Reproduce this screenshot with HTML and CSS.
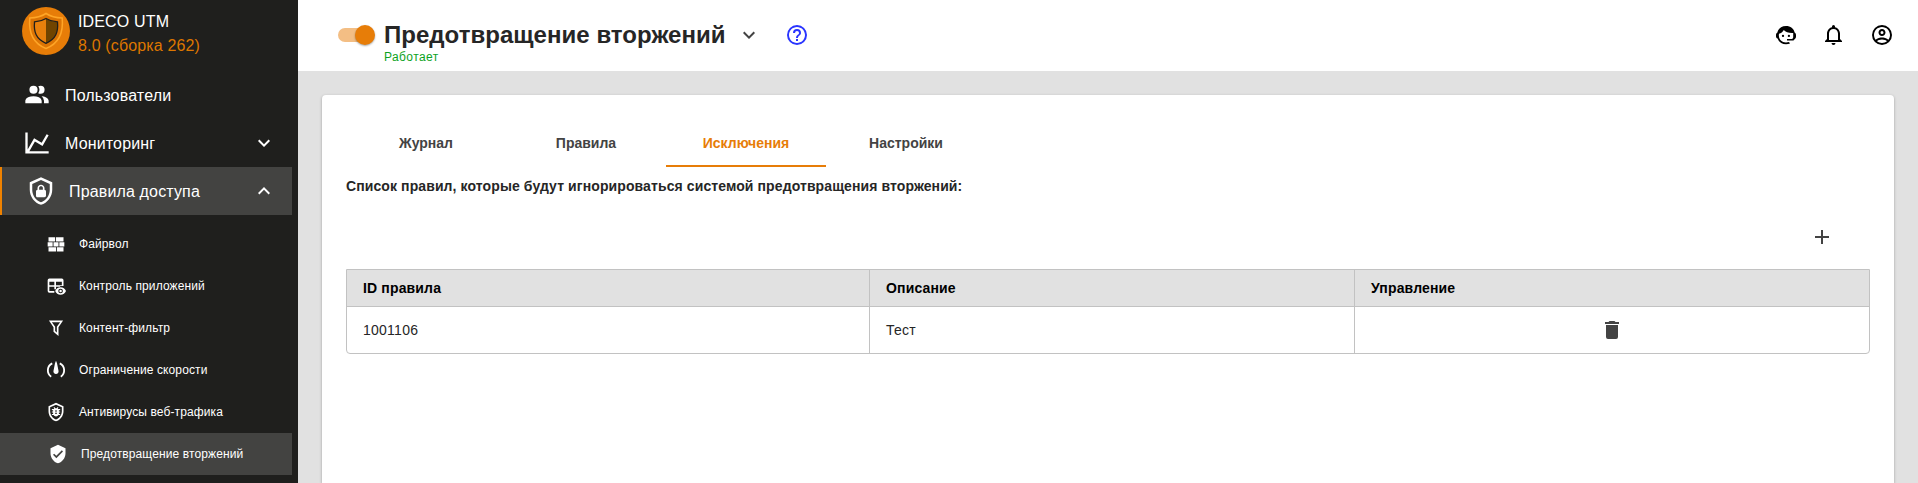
FILE: index.html
```html
<!DOCTYPE html>
<html lang="ru">
<head>
<meta charset="utf-8">
<title>Предотвращение вторжений</title>
<link rel="stylesheet" href="styles.css">
</head>
<body>
<div class="app">
  <aside class="sidebar">
    <div class="brand">
      <svg class="brand-logo" viewBox="0 0 48 48">
        <circle cx="24" cy="24" r="24" fill="#e77d08"/>
        <path d="M24 6.500C19 9.700 14 10.800 7.800 11 6.500 25 10 36 24 41.500 38 36 41.500 25 40.200 11 34 10.800 29 9.700 24 6.500Z" fill="#dc7404" stroke="#ffa526" stroke-width="1.500"/>
        <path d="M24 11.500C20 14 16.500 14.700 12.500 14.900 11.600 25 14 32 24 36.300Z" fill="#e8800c"/>
        <path d="M24 11.500C28 14 31.500 14.700 35.500 14.900 36.400 25 34 32 24 36.300Z" fill="#704400"/>
        <path d="M24 11.500C20 14 16.500 14.700 12.500 14.900 11.600 25 14 32 24 36.300 34 32 36.400 25 35.500 14.900 31.500 14.700 28 14 24 11.500Z" fill="none" stroke="#1f1f1d" stroke-width="1.300"/>
      </svg>
      <div class="brand-text">
        <div>IDECO UTM</div>
        <div class="brand-version">8.0 (сборка 262)</div>
      </div>
    </div>
    <nav class="menu">
      <a class="item">
        <svg class="i28" viewBox="0 0 24 24"><path d="M16 17V19H2V17S2 13 9 13 16 17 16 17M12.500 7.500A3.500 3.500 0 1 0 9 11A3.500 3.500 0 0 0 12.500 7.500M15.940 13A5.320 5.320 0 0 1 18 17V19H22V17S22 13.370 15.940 13M15 4A3.390 3.390 0 0 0 13.070 4.590A5 5 0 0 1 13.070 10.410A3.390 3.390 0 0 0 15 11A3.500 3.500 0 0 0 15 4Z"/></svg>
        <span>Пользователи</span>
      </a>
      <a class="item">
        <svg class="i28" viewBox="0 0 24 24"><path d="M16 11.780L20.240 4.450L21.970 5.450L16.740 14.500L10.230 10.750L5.460 19H22V21H2V3H4V17.540L9.500 8L16 11.780Z"/></svg>
        <span>Мониторинг</span>
        <svg class="chevron" viewBox="0 0 24 24"><path d="M7.410 8.580L12 13.170L16.590 8.580L18 10L12 16L6 10L7.410 8.580Z"/></svg>
      </a>
      <a class="item item-open">
        <svg class="i30" viewBox="0 0 24 24"><path d="M21 11C21 16.500 17.200 21.700 12 23C6.800 21.700 3 16.500 3 11V5L12 1L21 5V11M12 21C15.800 20 19 15.500 19 11.200V6.300L12 3.200L5 6.300V11.200C5 15.500 8.200 20 12 21M14.800 11V9.500C14.800 8.100 13.400 7 12 7S9.200 8.100 9.200 9.500V11C8.600 11 8 11.600 8 12.200V15.700C8 16.400 8.600 17 9.200 17H14.700C15.400 17 16 16.400 16 15.800V12.300C16 11.600 15.400 11 14.800 11M13.500 11H10.500V9.500C10.500 8.700 11.200 8.200 12 8.200S13.500 8.700 13.500 9.500V11Z" fill-rule="evenodd"/></svg>
        <span>Правила доступа</span>
        <svg class="chevron" viewBox="0 0 24 24"><path d="M7.410 15.410L12 10.830L16.590 15.410L18 14L12 8L6 14Z"/></svg>
      </a>
    </nav>
    <nav class="submenu">
      <a class="sub">
        <svg class="i20" viewBox="0 0 24 24"><path d="M3 16H12V21H3V16M2 10H8V15H2V10M9 10H15V15H9V10M16 10H22V15H16V10M13 16H21V21H13V16M3 4H11V9H3V4M12 4H21V9H12V4Z"/></svg>
        <span>Файрвол</span>
      </a>
      <a class="sub">
        <svg class="i20" viewBox="0 0 24 24"><path fill-rule="evenodd" d="M19 3H4A2 2 0 0 0 2 5V18A2 2 0 0 0 4 20H10V18H4V13H10V16H12V13H17V12H21V5A2 2 0 0 0 19 3M10 11H4V7H10ZM19 11H12V7H19ZM17.500 13.500C14.500 13.500 12 15.300 11 18 12 20.700 14.500 22.500 17.500 22.500S23 20.700 24 18C23 15.300 20.500 13.500 17.500 13.500M17.500 20.800A2.800 2.800 0 1 1 17.500 15.200 2.800 2.800 0 0 1 17.500 20.800M17.500 16.500A1.500 1.500 0 1 0 17.500 19.500 1.500 1.500 0 0 0 17.500 16.500Z"/></svg>
        <span>Контроль приложений</span>
      </a>
      <a class="sub">
        <svg class="i20" viewBox="0 0 24 24"><path d="M15 21.500L9 16.500V11L3.500 3H20.500L15 11V21.500M7.040 5L11 10.400V15.580L13 17.300V10.400L16.960 5H7.040Z"/></svg>
        <span>Контент-фильтр</span>
      </a>
      <a class="sub">
        <svg class="i20" viewBox="0 0 24 24"><path d="M12 1L10.800 4 9 13A3.100 3.100 0 1 0 15 13L13.200 4Z"/><path d="M7.500 4A9.300 9.300 0 0 0 6.200 20M16.500 4A9.300 9.300 0 0 1 17.800 20" fill="none" stroke="#fff" stroke-width="2.200"/></svg>
        <span>Ограничение скорости</span>
      </a>
      <a class="sub">
        <svg class="i20" viewBox="0 0 24 24"><path fill-rule="evenodd" d="M21 11C21 16.500 17.200 21.700 12 23C6.800 21.700 3 16.500 3 11V5L12 1L21 5V11M12 21C15.800 20 19 15.500 19 11.200V6.300L12 3.200L5 6.300V11.200C5 15.500 8.200 20 12 21Z"/><path fill-rule="evenodd" d="M17 8.500V9.800H15.500V11.400H17V12.700H15.500V14.300H17V15.600H15A3.500 3.500 0 0 1 9 15.600H7V14.300H8.500V12.700H7V11.400H8.500V9.800H7V8.500H9.300L10 7.900 9 6.900 9.900 6 11.300 7.400H12.700L14.100 6 15 6.900 14 7.900 14.700 8.500ZM10.800 10.300V11.500H13.200V10.300ZM10.800 13V14.200H13.200V13Z"/></svg>
        <span>Антивирусы веб-трафика</span>
      </a>
      <a class="sub sub-active">
        <svg class="i20" viewBox="0 0 24 24"><path fill-rule="evenodd" d="M10 17L6 13L7.410 11.590L10 14.170L16.590 7.580L18 9M12 1L3 5V11C3 16.550 6.840 21.740 12 23C17.160 21.740 21 16.550 21 11V5L12 1Z"/></svg>
        <span>Предотвращение вторжений</span>
      </a>
    </nav>
  </aside>
  <div class="main">
    <header class="topbar">
      <div class="toggle"><div class="knob"></div></div>
      <div class="heading">
        <h1>Предотвращение вторжений</h1>
        <div class="status">Работает</div>
      </div>
      <svg class="i24 title-chevron" viewBox="0 0 24 24"><path d="M7.410 8.580L12 13.170L16.590 8.580L18 10L12 16L6 10L7.410 8.580Z"/></svg>
      <svg class="i24 help" viewBox="0 0 24 24"><path d="M11 18H13V16H11V18M12 2A10 10 0 0 0 2 12A10 10 0 0 0 12 22A10 10 0 0 0 22 12A10 10 0 0 0 12 2M12 20C7.590 20 4 16.410 4 12C4 7.590 7.590 4 12 4C16.410 4 20 7.590 20 12C20 16.410 16.410 20 12 20M12 6A4 4 0 0 0 8 10H10A2 2 0 0 1 12 8A2 2 0 0 1 14 10C14 12 11 11.750 11 15H13C13 12.750 16 12.500 16 10A4 4 0 0 0 12 6Z"/></svg>
      <div class="actions">
        <svg class="i24" viewBox="0 0 24 24"><path d="M3.400 9.500C4.200 5.500 7.500 3 12 3S19.800 5.500 20.600 9.500C21.500 10 22 11 22 12.200V13.800C22 15 21.300 16 20.300 16.400L19.500 17.500H13V16H18.300L19.200 14.500V10C15 10.200 11.500 9.300 9.800 7 8.800 9 7 10.300 5 10.800 4 16 7.500 19.500 12 19.500 13 19.500 14 19.300 15 19L16 20.500C14.800 21 13.500 21.300 12 21.300 8 21.300 4.800 19 3.600 15.600 2.600 15.300 2 14.400 2 13.300V12C2 10.900 2.500 10 3.400 9.500Z"/><circle cx="9" cy="12.900" r="1.150"/><circle cx="14.900" cy="12.900" r="1.150"/></svg>
        <svg class="i24" viewBox="0 0 24 24"><path d="M16 17H7V10.500C7 8 9 6 11.500 6C14 6 16 8 16 10.500M18 16V10.500C18 7.430 15.860 4.860 13 4.180V3.500A1.500 1.500 0 0 0 11.500 2A1.500 1.500 0 0 0 10 3.500V4.180C7.130 4.860 5 7.430 5 10.500V16L3 18V19H20V18M11.500 22A2 2 0 0 0 13.500 20H9.500A2 2 0 0 0 11.500 22Z"/></svg>
        <svg class="i24" viewBox="0 0 24 24"><path d="M12 2A10 10 0 0 0 2 12A10 10 0 0 0 12 22A10 10 0 0 0 22 12A10 10 0 0 0 12 2M7.070 18.280C7.500 17.380 10.120 16.500 12 16.500C13.880 16.500 16.500 17.380 16.930 18.280C15.570 19.360 13.860 20 12 20C10.140 20 8.430 19.360 7.070 18.280M18.360 16.830C16.930 15.090 13.460 14.500 12 14.500C10.540 14.500 7.070 15.090 5.640 16.830C4.620 15.500 4 13.820 4 12C4 7.590 7.590 4 12 4C16.410 4 20 7.590 20 12C20 13.820 19.380 15.500 18.360 16.830M12 6C10.060 6 8.500 7.560 8.500 9.500C8.500 11.440 10.060 13 12 13C13.940 13 15.500 11.440 15.500 9.500C15.500 7.560 13.940 6 12 6M12 11A1.500 1.500 0 0 1 10.500 9.500A1.500 1.500 0 0 1 12 8A1.500 1.500 0 0 1 13.500 9.500A1.500 1.500 0 0 1 12 11Z"/></svg>
      </div>
    </header>
    <section class="card">
      <div class="tabs">
        <div class="tab">Журнал</div>
        <div class="tab">Правила</div>
        <div class="tab tab-active">Исключения</div>
        <div class="tab">Настройки</div>
      </div>
      <p class="caption">Список правил, которые будут игнорироваться системой предотвращения вторжений:</p>
      <div class="tools">
        <svg class="i24" viewBox="0 0 24 24"><path d="M19 13H13V19H11V13H5V11H11V5H13V11H19V13Z"/></svg>
      </div>
      <div class="table">
        <div class="row head">
          <div class="cell">ID правила</div><div class="cell">Описание</div><div class="cell">Управление</div>
        </div>
        <div class="row">
          <div class="cell">1001106</div><div class="cell">Тест</div>
          <div class="cell manage"><svg class="i24" viewBox="0 0 24 24"><path d="M19 4H15.500L14.500 3H9.500L8.500 4H5V6H19M6 19A2 2 0 0 0 8 21H16A2 2 0 0 0 18 19V7H6V19Z"/></svg></div>
        </div>
      </div>
    </section>
  </div>
</div>
</body>
</html>
```
FILE: styles.css
```css
* { box-sizing: border-box; }
body { margin: 0; font-family: "Liberation Sans", Arial, sans-serif; overflow: hidden; }
svg { display: block; flex: none; fill: currentColor; }
.i20 { width: 20px; height: 20px; }
.i24 { width: 24px; height: 24px; }
.i28 { width: 28px; height: 28px; }
.i30 { width: 30px; height: 30px; }

.app { display: flex; height: 483px; }

.sidebar { width: 298px; flex: none; background: #1f1f1d; color: #fff; padding-right: 6px; }
.brand { display: flex; height: 71px; padding: 7px 0 0 22px; }
.brand-logo { width: 48px; height: 48px; }
.brand-text { padding: 3px 0 0 8px; font-size: 16px; line-height: 24px; letter-spacing: .15px; }
.brand-version { color: #dd7600; }

.item { display: flex; align-items: center; height: 48px; padding: 0 16px 0 23px; font-size: 16px; letter-spacing: .15px; }
.item span { flex: 1; margin-left: 14px; padding-top: 2px; }
.item-open { background: #434341; border-left: 2px solid #f08200; padding-left: 24px; }
.item-open span { margin-left: 13px; }
.chevron { width: 24px; height: 24px; }
.submenu { padding-top: 8px; }
.sub { display: flex; align-items: center; height: 42px; padding-left: 46px; font-size: 12px; gap: 13px; letter-spacing: .11px; }
.sub-active { background: #434341; padding-left: 48px; }

.main { flex: 1; background: #e1e1e1; display: flex; flex-direction: column; }
.topbar { display: flex; height: 71px; flex: none; background: #fff; padding: 0 24px 0 40px; }
.toggle { width: 36px; height: 14px; margin-top: 28px; border-radius: 7px; background: #f3be84; display: flex; align-items: center; justify-content: flex-end; }
.knob { flex: none; width: 20px; height: 20px; margin-right: -1px; border-radius: 50%; background: #e77d08; box-shadow: 0 1px 2px rgba(0,0,0,.35); }
.heading { width: 341px; margin: 20px 0 0 10px; }
h1 { margin: 0; font-size: 24px; line-height: 30px; letter-spacing: .03px; color: #262626; white-space: nowrap; }
.status { font-size: 12px; line-height: 14px; letter-spacing: .4px; color: #0da31e; }
.title-chevron { margin: 23px 0 0 12px; color: #434343; }
.help { margin: 23px 0 0 24px; color: #2a35ff; }
.actions { display: flex; gap: 24px; margin: 23px 0 0 auto; color: #000; }

.card { flex: 1; margin: 24px 24px 0; padding: 24px 24px 0; background: #fff; border-radius: 4px 4px 0 0; box-shadow: 0 1px 3px rgba(0,0,0,.3); color: #262626; font-size: 14px; }
.tabs { display: flex; }
.tab { width: 160px; height: 48px; line-height: 48px; text-align: center; font-weight: bold; color: #434343; }
.tab-active { color: #e77d08; border-bottom: 2px solid #e77d08; }
.caption { margin: 11px 0 0; font-weight: bold; line-height: 16px; letter-spacing: .1px; }
.tools { display: flex; justify-content: flex-end; padding: 31px 36px 0 0; color: #434343; }
.table { margin-top: 20px; border: 1px solid #c2c2c2; border-radius: 0 0 4px 4px; letter-spacing: .25px; }
.row { display: grid; grid-template-columns: 522px 485px 1fr; height: 46px; }
.head { height: 37px; background: #e1e1e1; border-bottom: 1px solid #c2c2c2; font-weight: bold; letter-spacing: .15px; color: #000; }
.cell { display: flex; align-items: center; padding-left: 16px; }
.cell + .cell { border-left: 1px solid #c2c2c2; }
.cell + .manage { justify-content: center; padding-left: 0; color: #434343; }
```
